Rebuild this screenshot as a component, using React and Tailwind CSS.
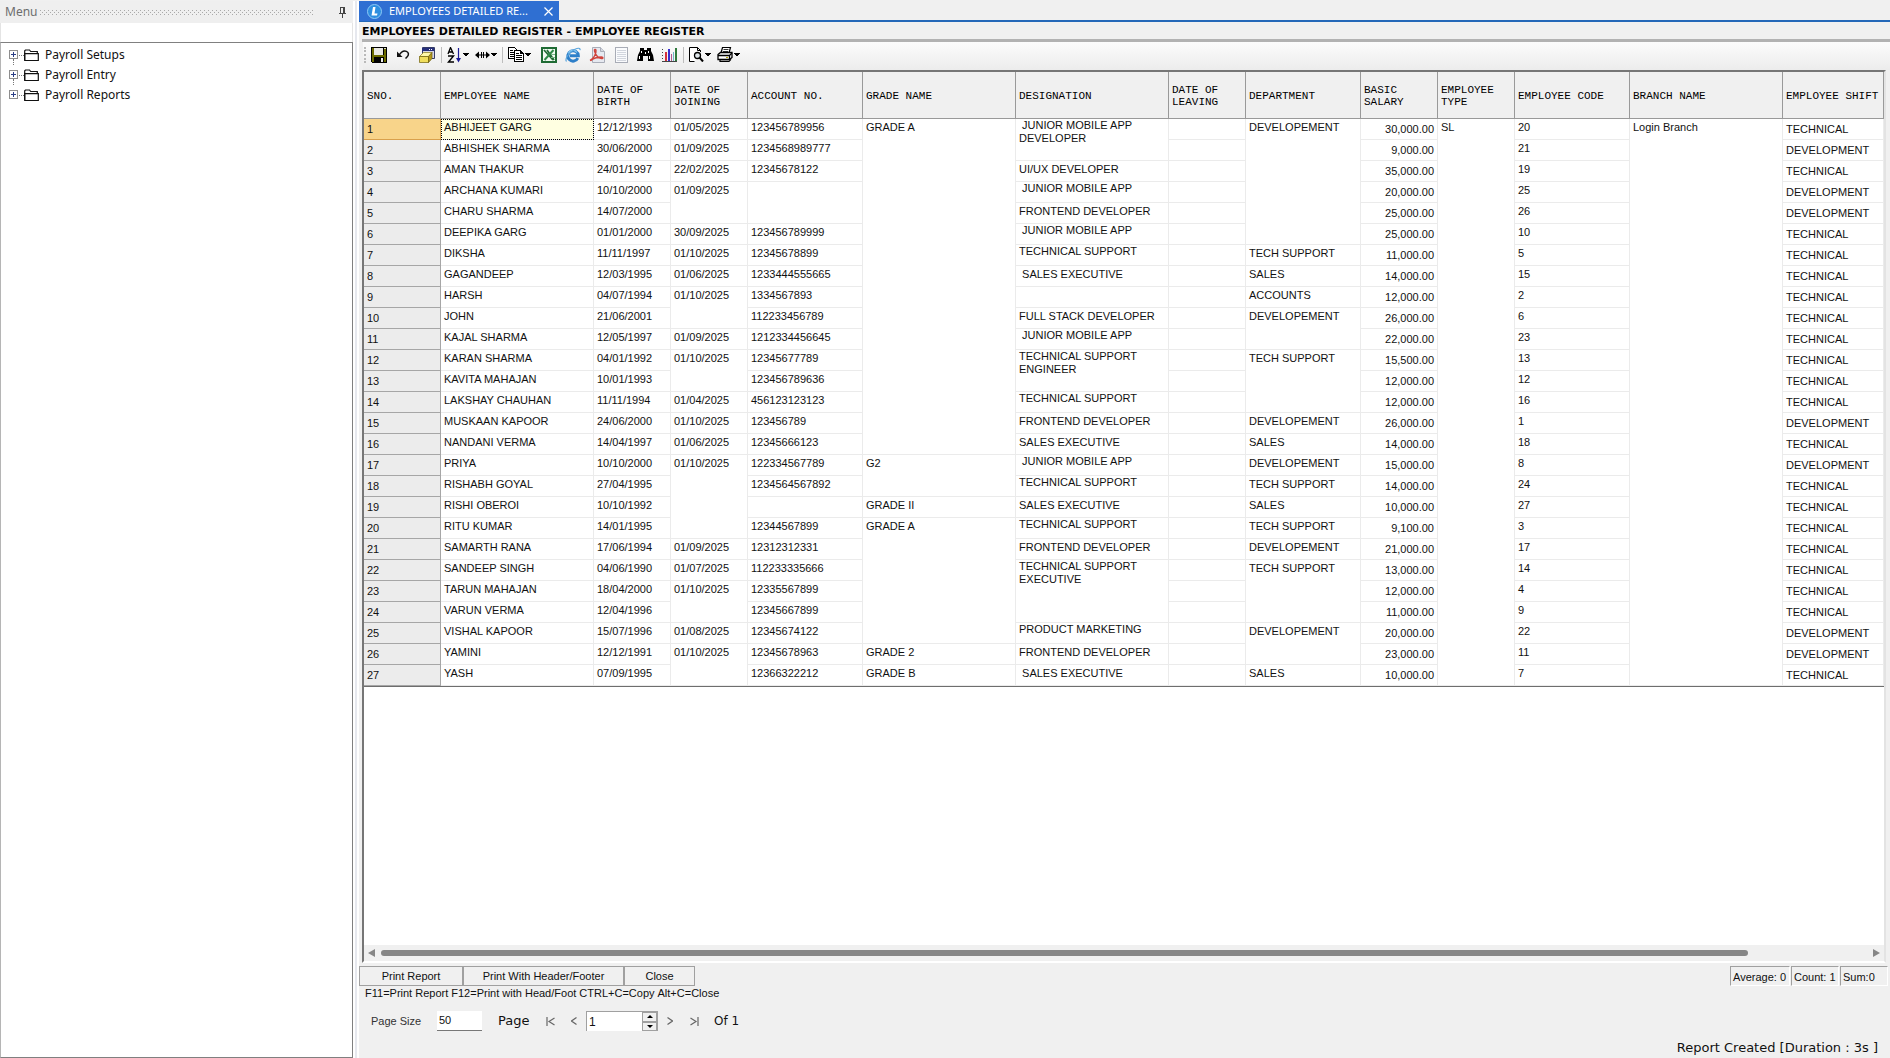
import React, { useState } from "react";
import clsx from "clsx";

const columns = [
    { key: "sno", label: "SNO.", width: "w-[77px]" },
    { key: "name", label: "EMPLOYEE NAME", width: "w-[153px]" },
    { key: "dob", label: "DATE OF BIRTH", width: "w-[77px]" },
    { key: "doj", label: "DATE OF JOINING", width: "w-[77px]" },
    { key: "account", label: "ACCOUNT NO.", width: "w-[115px]" },
    { key: "grade", label: "GRADE NAME", width: "w-[153px]" },
    { key: "designation", label: "DESIGNATION", width: "w-[153px]" },
    { key: "leaving", label: "DATE OF LEAVING", width: "w-[77px]" },
    { key: "department", label: "DEPARTMENT", width: "w-[115px]" },
    { key: "salary", label: "BASIC SALARY", width: "w-[77px]" },
    { key: "type", label: "EMPLOYEE TYPE", width: "w-[77px]" },
    { key: "code", label: "EMPLOYEE CODE", width: "w-[115px]" },
    { key: "branch", label: "BRANCH NAME", width: "w-[153px]" },
    { key: "shift", label: "EMPLOYEE SHIFT", width: "w-auto" },
];

// null means the cell is merged into the one above it
const _ = null;
const T = "TECHNICAL";
const D = "DEVELOPMENT";
const rows = [
    ["1", "ABHIJEET GARG", "12/12/1993", "01/05/2025", "123456789956", "GRADE A", " JUNIOR MOBILE APP\nDEVELOPER", "", "DEVELOPEMENT", "30,000.00", "SL", "20", "Login Branch", T],
    ["2", "ABHISHEK SHARMA", "30/06/2000", "01/09/2025", "1234568989777", _, _, "", _, "9,000.00", _, "21", _, D],
    ["3", "AMAN THAKUR", "24/01/1997", "22/02/2025", "12345678122", _, "UI/UX DEVELOPER", "", _, "35,000.00", _, "19", _, T],
    ["4", "ARCHANA KUMARI", "10/10/2000", "01/09/2025", "", _, " JUNIOR MOBILE APP", "", _, "20,000.00", _, "25", _, D],
    ["5", "CHARU SHARMA", "14/07/2000", _, _, _, "FRONTEND DEVELOPER", "", _, "25,000.00", _, "26", _, D],
    ["6", "DEEPIKA GARG", "01/01/2000", "30/09/2025", "123456789999", _, " JUNIOR MOBILE APP", "", _, "25,000.00", _, "10", _, T],
    ["7", "DIKSHA", "11/11/1997", "01/10/2025", "12345678899", _, "TECHNICAL SUPPORT", "", "TECH SUPPORT", "11,000.00", _, "5", _, T],
    ["8", "GAGANDEEP", "12/03/1995", "01/06/2025", "1233444555665", _, " SALES EXECUTIVE", "", "SALES", "14,000.00", _, "15", _, T],
    ["9", "HARSH", "04/07/1994", "01/10/2025", "1334567893", _, "", "", "ACCOUNTS", "12,000.00", _, "2", _, T],
    ["10", "JOHN", "21/06/2001", _, "112233456789", _, "FULL STACK DEVELOPER", "", "DEVELOPEMENT", "26,000.00", _, "6", _, T],
    ["11", "KAJAL SHARMA", "12/05/1997", "01/09/2025", "1212334456645", _, " JUNIOR MOBILE APP", "", _, "22,000.00", _, "23", _, T],
    ["12", "KARAN SHARMA", "04/01/1992", "01/10/2025", "12345677789", _, "TECHNICAL SUPPORT\nENGINEER", "", "TECH SUPPORT", "15,500.00", _, "13", _, T],
    ["13", "KAVITA MAHAJAN", "10/01/1993", _, "123456789636", _, _, "", _, "12,000.00", _, "12", _, T],
    ["14", "LAKSHAY CHAUHAN", "11/11/1994", "01/04/2025", "456123123123", _, "TECHNICAL SUPPORT", "", _, "12,000.00", _, "16", _, T],
    ["15", "MUSKAAN KAPOOR", "24/06/2000", "01/10/2025", "123456789", _, "FRONTEND DEVELOPER", "", "DEVELOPEMENT", "26,000.00", _, "1", _, D],
    ["16", "NANDANI VERMA", "14/04/1997", "01/06/2025", "12345666123", _, "SALES EXECUTIVE", "", "SALES", "14,000.00", _, "18", _, T],
    ["17", "PRIYA", "10/10/2000", "01/10/2025", "122334567789", "G2", " JUNIOR MOBILE APP", "", "DEVELOPEMENT", "15,000.00", _, "8", _, D],
    ["18", "RISHABH GOYAL", "27/04/1995", _, "1234564567892", _, "TECHNICAL SUPPORT", "", "TECH SUPPORT", "14,000.00", _, "24", _, T],
    ["19", "RISHI OBEROI", "10/10/1992", _, "", "GRADE II", "SALES EXECUTIVE", "", "SALES", "10,000.00", _, "27", _, T],
    ["20", "RITU KUMAR", "14/01/1995", _, "12344567899", "GRADE A", "TECHNICAL SUPPORT", "", "TECH SUPPORT", "9,100.00", _, "3", _, T],
    ["21", "SAMARTH RANA", "17/06/1994", "01/09/2025", "12312312331", _, "FRONTEND DEVELOPER", "", "DEVELOPEMENT", "21,000.00", _, "17", _, T],
    ["22", "SANDEEP SINGH", "04/06/1990", "01/07/2025", "112233335666", _, "TECHNICAL SUPPORT\nEXECUTIVE", "", "TECH SUPPORT", "13,000.00", _, "14", _, T],
    ["23", "TARUN MAHAJAN", "18/04/2000", "01/10/2025", "12335567899", _, _, "", _, "12,000.00", _, "4", _, T],
    ["24", "VARUN VERMA", "12/04/1996", _, "12345667899", _, _, "", _, "11,000.00", _, "9", _, T],
    ["25", "VISHAL KAPOOR", "15/07/1996", "01/08/2025", "12345674122", _, "PRODUCT MARKETING", "", "DEVELOPEMENT", "20,000.00", _, "22", _, D],
    ["26", "YAMINI", "12/12/1991", "01/10/2025", "12345678963", "GRADE 2", "FRONTEND DEVELOPER", "", _, "23,000.00", _, "11", _, D],
    ["27", "YASH", "07/09/1995", _, "12366322212", "GRADE B", " SALES EXECUTIVE", "", "SALES", "10,000.00", _, "7", _, T],
];

const getRowSpan = (rowIndex, colIndex) => {
    let span = 1;
    while (rowIndex + span < rows.length && rows[rowIndex + span][colIndex] === null) span++;
    return span;
};

const getCellStyle = (key, selected, value) => {
    switch (key) {
        case "sno":
            return selected
                ? "bg-[#f8d48a] border-[#d9a04c] align-middle"
                : "bg-[#ececec] border-[#a6a6a6] align-middle";
        case "name":
            return clsx(
                "border-[#ebebeb] align-top leading-[14px] pt-px",
                selected && "bg-[#ffffe1] outline-1 outline-dotted outline-black -outline-offset-1"
            );
        case "designation":
            return clsx(
                "border-[#ebebeb] align-top whitespace-pre",
                /APP|SUPPORT|MARKETING/.test(value) ? "leading-[13px]" : "leading-[14px] pt-px"
            );
        case "salary":
            return "border-[#ebebeb] align-middle text-right";
        case "shift":
            return "border-[#ebebeb] align-middle";
        default:
            return "border-[#ebebeb] align-top leading-[14px] pt-px";
    }
};

function Caret() {
    return (
        <svg width="6" height="4" viewBox="0 0 6 4" shapeRendering="crispEdges">
            <path d="M0 0h6L3 4z" fill="#000" />
        </svg>
    );
}

function SaveIcon() {
    return (
        <svg width="16" height="16" viewBox="0 0 16 16" shapeRendering="crispEdges">
            <path d="M0 0h16v16H1l-1-1z" fill="#000" />
            <path d="M1 1h2v7h10V2h2v13H1z" fill="#6b6b00" />
            <path d="M3 1h9v7H3z" fill="#e9e9e4" />
            <path d="M13 1h2v1h-2z" fill="#d8d8c0" />
            <path d="M3 10h10v6H3z" fill="#000" />
            <path d="M10 11h2v4h-2z" fill="#eee" />
        </svg>
    );
}

function UndoIcon() {
    return (
        <svg width="14" height="12" viewBox="0 0 14 12" fill="none">
            <path d="M3 6.5C5 3 8 1.6 10.4 2.4c2.600.9 2.600 3.800.6 5.600l-1.500 1.500" stroke="#111" strokeWidth="1.500" />
            <path d="M1 2.500v5.500h5.500z" fill="#111" />
        </svg>
    );
}

function EraserIcon() {
    return (
        <svg width="16" height="16" viewBox="0 0 16 16">
            <path d="M3.500.5h12v11h-12z" fill="#d6d6e6" stroke="#333a66" />
            <path d="M3 1h12v3H3z" fill="#27307c" />
            <path d="M10 2h1v1h-1zM12 2h1v1h-1z" fill="#fff" />
            <path d="M.5 9.500l4-4h8.500l-3.500 4z" fill="#fff9a8" stroke="#8a7a12" strokeWidth=".7" />
            <path d="M.5 9.500h9v6H.5z" fill="#f0de5c" stroke="#6d5f0c" strokeWidth=".7" />
            <path d="M9.500 9.500l3.500-4v6l-3.500 4z" fill="#b59a1c" stroke="#6d5f0c" strokeWidth=".7" />
        </svg>
    );
}

function SortIcon() {
    return (
        <svg width="15" height="16" viewBox="0 0 15 16" fill="none">
            <path d="M1 7l2.500-6.500L6.500 7M1.800 5h4" stroke="#000" strokeWidth="1.300" />
            <path d="M1 9h5.500L1.500 15H7" stroke="#000" strokeWidth="1.400" />
            <path d="M11.500 1v11" stroke="#1c1c96" strokeWidth="1.200" />
            <path d="M9 11h5l-2.500 4.500z" fill="#1c1c96" />
        </svg>
    );
}

function WidthIcon() {
    return (
        <svg width="15" height="8" viewBox="0 0 15 8">
            <path d="M0 4l4-3.500v7zM15 4l-4-3.500v7z" fill="#000" />
            <path d="M3 3.500h9v1H3zM6 1h1v6H6zM8 1h1v6H8z" fill="#000" />
        </svg>
    );
}

function CopyIcon() {
    return (
        <svg width="16" height="15" viewBox="0 0 16 15" shapeRendering="crispEdges">
            <path d="M.5.5h6l3 3v8h-9z" fill="#fff" stroke="#000" />
            <path d="M2 3h3v1H2zM2 5h4v1H2zM2 7h4v1H2zM2 9h4v1H2z" fill="#000" />
            <path d="M6.500 3.500h6l3 3v8h-9z" fill="#fff" stroke="#000" />
            <path d="M12 3v4h4M8 6h3v1H8zM8 8h6v1H8zM8 10h6v1H8zM8 12h6v1H8z" fill="#000" />
        </svg>
    );
}

function ExcelIcon() {
    return (
        <svg width="16" height="16" viewBox="0 0 16 16">
            <path d="M1 1h14v14H1z" fill="#f2faf2" stroke="#1f6b34" strokeWidth="2" />
            <path d="M3 3l9 10M6 3l7 10" stroke="#1f6b34" strokeWidth="1.700" />
            <path d="M12.500 3L3.500 13" stroke="#2f8a48" strokeWidth="2" />
            <path d="M10 10h4v1h-4zM10 7h4v1h-4z" fill="#7fb88c" />
        </svg>
    );
}

function BrowserIcon() {
    return (
        <svg width="16" height="16" viewBox="0 0 16 16" fill="none">
            <path d="M12.800 11.200A5.200 5.200 0 1 1 13.300 8.800H5" stroke="#2d7fc9" strokeWidth="3" />
            <path d="M12 5.500a4.800 4.800 0 0 0-8.500 1" stroke="#8accf5" strokeWidth="1.200" />
            <path d="M1.500 14.500C-.5 12 4 5 10 2.200c3-1.400 5.500-1.400 5 .9" stroke="#5aa5dd" strokeWidth="1.200" />
        </svg>
    );
}

function PdfIcon() {
    return (
        <svg width="16" height="16" viewBox="0 0 16 16" fill="none">
            <path d="M3.500.5h8l4 4v11h-12z" fill="#e6e9f0" stroke="#a9adb8" />
            <path d="M11.500.5v4h4" fill="#d4d8e0" stroke="#a9adb8" />
            <path d="M1 13.500C4 12 7.500 7 7 3.500c-.3-1.700-2-1.200-1.500.5C6.500 7.500 9 11 12.500 11.500c2 .2 1.800-1.400 0-1.500C9 10 4 11.500 1.500 13.800" stroke="#d0443c" strokeWidth="1.400" />
        </svg>
    );
}

function SheetIcon() {
    return (
        <svg width="13" height="16" viewBox="0 0 13 16" shapeRendering="crispEdges">
            <path d="M.5.5h12v15H.5z" fill="#fafbfd" stroke="#a8acb6" />
            <path d="M2 3h9v1H2zM2 5h9v1H2zM2 7h9v1H2zM2 9h9v1H2zM2 11h9v1H2zM2 13h9v1H2z" fill="#d2d6de" />
        </svg>
    );
}

function FindIcon() {
    return (
        <svg width="17" height="15" viewBox="0 0 17 15">
            <path d="M3 1h4v2h3V1h4v3l2 4 1 6h-6V9H6v5H0l1-6 2-4z" fill="#000" />
            <path d="M4 4h1v2H4zM11 4h1v2h-1zM2 9h1v3H2zM12 9h1v3h-1zM8 5h1v2H8z" fill="#fff" />
        </svg>
    );
}

function ChartIcon() {
    return (
        <svg width="15" height="15" viewBox="0 0 15 15" shapeRendering="crispEdges">
            <path d="M0 2h1v1H0zM0 5h1v1H0zM0 8h1v1H0zM0 11h1v1H0zM0 14h15v1H0z" fill="#444" />
            <path d="M3 5h2v9H3z" fill="#d6323c" />
            <path d="M6 2h2v12H6z" fill="#3a2fd0" />
            <path d="M9 7h1v7H9z" fill="#b05a90" />
            <path d="M11 5h1v9h-1z" fill="#6fb8c8" />
            <path d="M13 1h2v13h-2z" fill="#2f7a3c" />
        </svg>
    );
}

function PreviewIcon() {
    return (
        <svg width="15" height="15" viewBox="0 0 15 15" fill="none">
            <path d="M11.500 5V3.500l-3-3h-8v14h5" fill="#fff" stroke="#000" />
            <path d="M8.500.5v3h3" stroke="#000" />
            <circle cx="8.500" cy="8.500" r="3" fill="#dfe6ea" stroke="#000" strokeWidth="1.300" />
            <path d="M10.500 10.500l3.500 4" stroke="#000" strokeWidth="2" />
        </svg>
    );
}

function PrintIcon() {
    return (
        <svg width="16" height="15" viewBox="0 0 16 15" fill="none">
            <path d="M4 6l1.500-5.500h8L12 6" fill="#fff" stroke="#000" strokeWidth="1.200" />
            <path d="M6.500 2.500h5M6 4.500h5" stroke="#000" strokeWidth=".8" />
            <path d="M1 7.500L3.500 5.500h11.500v5l-2.500 2H1z" fill="#fff" stroke="#000" strokeWidth="1.300" />
            <path d="M1 8.500h11.500v4M12.500 8.500L15 6" stroke="#000" strokeWidth="1.300" />
            <path d="M3 12.500v1.800h9l2-2" stroke="#000" strokeWidth="1.200" />
            <path d="M9 10.500h2" stroke="#b8a800" />
        </svg>
    );
}

function Separator() {
    return <span className="w-px h-4 mx-[2px] bg-[#bdbdbd]" />;
}

function ToolButton({ label, dropdown, children }) {
    return (
        <button
            type="button"
            aria-label={label}
            className={clsx("h-6 flex items-center justify-center gap-px hover:bg-[#d8e6f5]", dropdown ? "w-7" : "w-6")}
        >
            {children}
            {dropdown && <Caret />}
        </button>
    );
}

function Folder({ label, last }) {
    return (
        <li className="h-5 flex items-center">
            <span className="w-[10px] h-5 flex flex-col items-center mr-[1px]">
                <span className="h-[5px]" />
                <svg width="9" height="9" viewBox="0 0 9 9" shapeRendering="crispEdges">
                    <path d="M.5.5h8v8h-8z" fill="#fff" stroke="#8e8e8e" />
                    <path d="M2 4h5v1H2zM4 2h1v5H4z" fill="#2b3f86" />
                </svg>
                {!last && <span className="flex-1 border-l border-dotted border-[#777]" />}
            </span>
            <span className="w-[5px] border-t border-dotted border-[#777]" />
            <svg width="15" height="13" viewBox="0 0 15 13" fill="none" stroke="#111" strokeWidth="1.200">
                <path d="M.7 11V1.700L1.500 1h4l1.200 1.500h6.600v2" />
                <path d="M.7 11.500V4.600h13.600v6.900H.7z" />
            </svg>
            <a href="#" className="ml-[6px] text-[12px] text-[#111]">{label}</a>
        </li>
    );
}

function MenuPanel() {
    return (
        <aside className="w-[353px] shrink-0 flex flex-col bg-white font-['Noto_Sans',sans-serif]">
            <div className="h-[22px] flex items-center bg-[#efefef] pl-[5px] pr-1">
                <span className="text-[12px] text-[#6d6d6d]">Menu</span>
                <svg className="ml-[3px] h-[5px] flex-1" shapeRendering="crispEdges">
                    <defs>
                        <pattern id="grip" width="4" height="4" patternUnits="userSpaceOnUse">
                            <path d="M0 0h1v1H0zM2 2h1v1H2z" fill="#a9a9a9" />
                        </pattern>
                    </defs>
                    <rect width="100%" height="5" fill="url(#grip)" />
                </svg>
                <button type="button" aria-label="Auto hide" className="w-9 flex justify-end pr-[2px]">
                    <svg width="9" height="11" viewBox="0 0 9 11" shapeRendering="crispEdges">
                        <path d="M2 0h5v6h1v1H5v4H4V7H1V6h1zM3 1v5h2V1z" fill="#444" fillRule="evenodd" />
                    </svg>
                </button>
            </div>
            <div className="h-[19px] bg-white border-x border-[#e4e4e4]" />
            <nav className="flex-1 border border-[#808080] border-l-[#b5b5b5]">
                <ul className="pl-[7px] pt-[2px]">
                    <Folder label="Payroll Setups" />
                    <Folder label="Payroll Entry" />
                    <Folder label="Payroll Reports" last />
                </ul>
            </nav>
        </aside>
    );
}

function Toolbar() {
    return (
        <div className="h-7 shrink-0 ml-1 pl-px pb-[3px] flex items-center bg-linear-to-b from-[#fcfcfc] to-[#ececec]">
            <span className="h-4 border-l-2 border-dotted border-[#b9b9b9] mr-px" />
            <ToolButton label="Save"><SaveIcon /></ToolButton>
            <ToolButton label="Undo"><UndoIcon /></ToolButton>
            <ToolButton label="Clear"><EraserIcon /></ToolButton>
            <Separator />
            <ToolButton label="Sort" dropdown><SortIcon /></ToolButton>
            <ToolButton label="Column width" dropdown><WidthIcon /></ToolButton>
            <Separator />
            <ToolButton label="Copy" dropdown><CopyIcon /></ToolButton>
            <div className="flex pl-1">
                <ToolButton label="Export to Excel"><ExcelIcon /></ToolButton>
                <ToolButton label="Export to HTML"><BrowserIcon /></ToolButton>
                <ToolButton label="Export to PDF"><PdfIcon /></ToolButton>
                <ToolButton label="Export to text"><SheetIcon /></ToolButton>
                <ToolButton label="Find"><FindIcon /></ToolButton>
                <ToolButton label="Chart"><ChartIcon /></ToolButton>
            </div>
            <Separator />
            <ToolButton label="Preview" dropdown><PreviewIcon /></ToolButton>
            <ToolButton label="Print" dropdown><PrintIcon /></ToolButton>
        </div>
    );
}

function RegisterTable() {
    return (
        <table className="w-full table-fixed border-separate border-spacing-0 border-b border-[#6e6e6e] text-[11px] text-[#111]">
            <thead>
                <tr className="h-[47px]">
                    {columns.map((col) => (
                        <th
                            key={col.key}
                            className={clsx(
                                "bg-[#f0f0f0] border-r border-b border-[#999] pl-[3px] pt-[2px] text-left align-middle font-normal leading-[12px] text-black font-['Liberation_Mono',monospace]",
                                col.width
                            )}
                        >
                            {col.label}
                        </th>
                    ))}
                </tr>
            </thead>
            <tbody>
                {rows.map((row, rowIndex) => (
                    <tr key={row[0]} className="h-[21px]">
                        {row.map((value, colIndex) => {
                            if (value === null) return null;
                            const key = columns[colIndex].key;
                            return (
                                <td
                                    key={key}
                                    rowSpan={getRowSpan(rowIndex, colIndex)}
                                    className={clsx("border-r border-b px-[3px]", getCellStyle(key, rowIndex === 0, value))}
                                >
                                    {value}
                                </td>
                            );
                        })}
                    </tr>
                ))}
            </tbody>
        </table>
    );
}

function HorizontalScroll() {
    return (
        <div className="h-4 flex items-center gap-[6px] bg-[#f0f0f0] px-1">
            <svg width="7" height="8" viewBox="0 0 7 8"><path d="M7 0v8L0 4z" fill="#868686" /></svg>
            <div className="flex-1">
                <div className="w-[92%] h-[6px] rounded-full bg-[#868686]" />
            </div>
            <svg width="7" height="8" viewBox="0 0 7 8"><path d="M0 0v8l7-4z" fill="#868686" /></svg>
        </div>
    );
}

function Footer() {
    const [page, setPage] = useState(1);

    return (
        <footer className="shrink-0 text-[11px] text-[#111]">
            <div className="flex justify-between pt-[3px]">
                <div className="flex h-5 [&>button]:border [&>button]:border-[#a0a0a0] [&>button]:hover:bg-[#e2eefa]">
                    <button type="button" className="w-[104px]">Print Report</button>
                    <button type="button" className="w-[161px]">Print With Header/Footer</button>
                    <button type="button" className="w-[71px]">Close</button>
                </div>
                <div className="flex h-5 gap-px pr-[2px] whitespace-nowrap [&>span]:border [&>span]:border-[#a0a0a0] [&>span]:border-r-white [&>span]:border-b-white [&>span]:pl-[2px] [&>span]:leading-[20px]">
                    <span className="w-[60px]">Average: 0</span>
                    <span className="w-12">Count: 1</span>
                    <span className="w-12">Sum:0</span>
                </div>
            </div>
            <p className="flex gap-[3px] pl-[6px] leading-[15px]">
                <span>F11=Print Report</span>
                <span>F12=Print with Head/Foot</span>
                <span>CTRL+C=Copy</span>
                <span>Alt+C=Close</span>
            </p>
            <div className="flex items-center h-10 pl-3 text-[#333]">
                <label htmlFor="pageSize" className="w-[66px]">Page Size</label>
                <input
                    id="pageSize"
                    defaultValue="50"
                    className="w-[45px] h-5 bg-white border-b border-[#777] pl-[2px] pb-[2px] text-[#111]"
                />
                <label htmlFor="page" className="ml-4 w-10 text-[13px] text-[#111] font-['DejaVu_Sans',sans-serif]">Page</label>
                <div className="flex [&>button]:w-6 [&>button]:h-5 [&>button]:flex [&>button]:items-center [&>button]:justify-center">
                    <button type="button" aria-label="First page" onClick={() => setPage(1)}>
                        <svg width="9" height="9" viewBox="0 0 9 9" fill="none" stroke="#666" strokeWidth="1.200"><path d="M1 0v9M8.500 1L3 4.500 8.500 8" /></svg>
                    </button>
                    <button type="button" aria-label="Previous page" onClick={() => setPage(1)}>
                        <svg width="6" height="8" viewBox="0 0 6 8" fill="none" stroke="#666" strokeWidth="1.200"><path d="M5.500.5L.5 4l5 3.500" /></svg>
                    </button>
                </div>
                <div className="flex w-[72px] h-5 bg-white border border-[#a0a0a0] border-b-0">
                    <input
                        id="page"
                        value={page}
                        onChange={(e) => setPage(e.target.value)}
                        className="flex-1 min-w-0 pl-[2px] text-[12px] text-[#111]"
                    />
                    <div className="w-[15px] flex flex-col [&>button]:flex-1 [&>button]:flex [&>button]:items-center [&>button]:justify-center [&>button]:bg-[#f0f0f0] [&>button]:border [&>button]:border-[#a0a0a0]">
                        <button type="button" aria-label="Increase page">
                            <svg width="6" height="3" viewBox="0 0 6 3"><path d="M0 3h6L3 0z" /></svg>
                        </button>
                        <button type="button" aria-label="Decrease page">
                            <svg width="6" height="3" viewBox="0 0 6 3"><path d="M0 0h6L3 3z" /></svg>
                        </button>
                    </div>
                </div>
                <div className="flex [&>button]:w-6 [&>button]:h-5 [&>button]:flex [&>button]:items-center [&>button]:justify-center">
                    <button type="button" aria-label="Next page">
                        <svg width="6" height="8" viewBox="0 0 6 8" fill="none" stroke="#666" strokeWidth="1.200"><path d="M.5.5l5 3.500-5 3.500" /></svg>
                    </button>
                    <button type="button" aria-label="Last page">
                        <svg width="9" height="9" viewBox="0 0 9 9" fill="none" stroke="#666" strokeWidth="1.200"><path d="M8 0v9M.5 1L6 4.500.5 8" /></svg>
                    </button>
                </div>
                <span className="ml-2 text-[12px] text-[#111] font-['DejaVu_Sans',sans-serif]">Of 1</span>
            </div>
            <p className="h-4 mb-px pr-3 text-right text-[13px] leading-[14px] font-['DejaVu_Sans',sans-serif]">
                Report Created [Duration : 3s ]
            </p>
        </footer>
    );
}

export default function App() {
    return (
        <div className="h-screen flex bg-[#f0f0f0] pt-px font-['Liberation_Sans',Arial,sans-serif]">
            <MenuPanel />
            <div className="w-[6px] shrink-0 border-x-2 border-white bg-[#e6e8ee]" />
            <main className="flex-1 min-w-0 flex flex-col">
                <div className="h-[21px] shrink-0 border-b-2 border-[#2468b8]">
                    <div className="w-[200px] h-5 flex items-center bg-[#2f6fd2] pl-2 pr-[6px] text-white font-['Noto_Sans',sans-serif]">
                        <svg width="15" height="15" viewBox="0 0 15 15">
                            <circle cx="7.500" cy="7.500" r="7" fill="#2f8fe0" stroke="#8cc8f5" />
                            <path d="M6 3h2.500L7.500 9.500h3l-.5 2H4.500z" fill="#fff" />
                        </svg>
                        <span className="ml-[7px] flex-1 text-[11px] whitespace-nowrap">EMPLOYEES DETAILED RE...</span>
                        <button type="button" aria-label="Close tab">
                            <svg width="9" height="9" viewBox="0 0 9 9" stroke="#fff" strokeWidth="1.200"><path d="M.5.5l8 8M8.500.5l-8 8" /></svg>
                        </button>
                    </div>
                </div>
                <h1 className="h-[17px] shrink-0 pl-[3px] text-[11px] leading-[19px] font-bold text-black font-['DejaVu_Sans',sans-serif]">
                    EMPLOYEES DETAILED REGISTER - EMPLOYEE REGISTER
                </h1>
                <div className="h-[3px] shrink-0 ml-[3px] bg-[#b2b2b2]" />
                <Toolbar />
                <div className="flex-1 min-h-0 ml-[3px] mr-1 flex flex-col border-2 border-[#767676] border-r-[#e3e3e3] border-b-white bg-white">
                    <div className="flex-1 min-h-0 overflow-hidden">
                        <RegisterTable />
                    </div>
                    <HorizontalScroll />
                </div>
                <Footer />
            </main>
        </div>
    );
}
